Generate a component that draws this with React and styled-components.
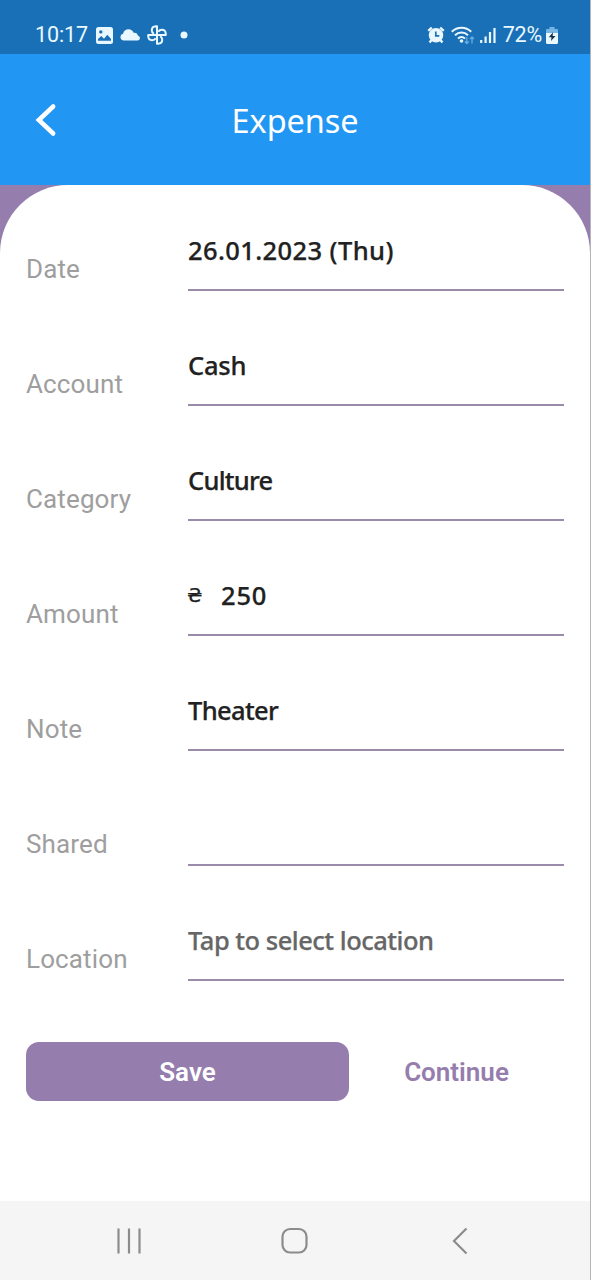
import React from "react";
import styled, { createGlobalStyle } from "styled-components";

const GlobalStyle = createGlobalStyle`
  * { box-sizing: border-box; }
  html, body { margin: 0; padding: 0; background: #fff; }
  button { border: 0; padding: 0; background: none; font: inherit; color: inherit; }
`;

const Screen = styled.div`
  width: 100%;
  height: 1280px;
  display: flex;
  flex-direction: column;
  overflow: hidden;
  background: #fff;
  border-right: 1px solid rgba(90, 90, 100, 0.45);
  font-family: Roboto, "Noto Sans", sans-serif;
`;

const StatusBar = styled.header`
  height: 54px;
  flex: none;
  display: flex;
  align-items: center;
  justify-content: space-between;
  padding: 16px 32px 0 35px;
  background: #1a70b7;
  color: #e9f8ff;
`;

const StatusGroup = styled.div`
  display: flex;
  align-items: center;
  gap: ${(p) => p.$gap}px;
`;

const StatusText = styled.span`
  font-size: 21.5px;
  line-height: 24px;
  letter-spacing: ${(p) => p.$tracking || 0}px;
`;

const Glyph = styled.svg`
  display: block;
  flex: none;
`;

const TitleBar = styled.div`
  height: 131px;
  flex: none;
  display: grid;
  grid-template-columns: 90px 1fr 90px;
  align-items: center;
  background: #2196f3;
  color: #fff;
`;

const BackButton = styled.button`
  display: flex;
  padding-left: 35px;
`;

const Title = styled.h1`
  margin: 0;
  padding-top: 3px;
  text-align: center;
  font: 400 32.5px/44px "Noto Sans", sans-serif;
  letter-spacing: -0.1px;
`;

const Backdrop = styled.main`
  flex: 1;
  display: flex;
  background: linear-gradient(#957dad 0 80px, #fff 80px);
`;

const Sheet = styled.section`
  flex: 1;
  padding: 46.4px 26px 0;
  background: #fff;
  border-radius: 68px 68px 0 0;
`;

const Fields = styled.div`
  display: flex;
  flex-direction: column;
  gap: 54.9px;
`;

const Field = styled.div`
  height: 60px;
  display: flex;
`;

const Label = styled.span`
  width: 162px;
  flex: none;
  padding-top: 23px;
  font-size: 26px;
  line-height: 30px;
  letter-spacing: 0.13px;
  color: #9e9e9e;
`;

const Value = styled.div`
  flex: 1;
  display: flex;
  align-items: flex-start;
  gap: 19px;
  border-bottom: 2px solid #998ba9;
  font: 500 25.5px/38px "Noto Sans", sans-serif;
  -webkit-text-stroke: 0.25px currentColor;
  white-space: nowrap;
  letter-spacing: ${(p) => p.$tracking || 0}px;
  color: ${(p) => (p.$muted ? "#666" : "#212121")};
`;

const Currency = styled.span`
  width: 14px;
  font: 400 20px/39px "DejaVu Sans", sans-serif;
  margin-left: -1px;
  margin-right: 1px;
`;

const Actions = styled.div`
  display: flex;
  margin-top: 61px;
`;

const ActionButton = styled.button`
  width: ${(p) => (p.$primary ? 323 : 215)}px;
  height: 59px;
  padding-top: 1px;
  border-radius: 13px;
  font-size: 26px;
  font-weight: 600;
  background: ${(p) => (p.$primary ? "#957dad" : "transparent")};
  color: ${(p) => (p.$primary ? "#fff" : "#957dad")};
`;

const NavBar = styled.nav`
  height: 79px;
  flex: none;
  display: grid;
  grid-template-columns: 165px 165px 168px;
  justify-content: start;
  justify-items: center;
  align-items: center;
  padding-left: 46px;
  background: #f5f5f5;
  color: #8c8c8c;
`;

const fields = [
  { label: "Date", value: "26.01.2023 (Thu)", tracking: 0.4 },
  { label: "Account", value: "Cash", tracking: -0.25 },
  { label: "Category", value: "Culture", tracking: -0.75 },
  { label: "Amount", value: "250", tracking: 0.8, currency: "₴" },
  { label: "Note", value: "Theater", tracking: -0.65 },
  { label: "Shared", value: "" },
  { label: "Location", value: "Tap to select location", tracking: -0.5, muted: true },
];

const ImageIcon = () => (
  <Glyph width="17" height="17" viewBox="0 0 17 17">
    <path fill="currentColor" fillRule="evenodd" d="M2.500 0h12A2.500 2.500 0 0 1 17 2.500v12a2.500 2.500 0 0 1-2.500 2.500h-12A2.500 2.500 0 0 1 0 14.500v-12A2.500 2.500 0 0 1 2.500 0ZM2 13.800h13V12l-3.700-4.200L8 11.700 5.300 9 2 12ZM4.800 3.200a1.700 1.700 0 1 0 0 3.400 1.700 1.700 0 0 0 0-3.400Z" />
  </Glyph>
);

const CloudIcon = () => (
  <Glyph width="20" height="12" viewBox="0 0 20 12">
    <path fill="currentColor" d="M3.500 11.500a3.400 3.400 0 0 1-.4-6.700C3.600 1.800 5.800.2 8.500.2c2.500 0 4.300 1.300 5.100 3.500 2.700-.3 4 1 4.200 2.700 3 .9 2.700 5.100-.3 5.100Z" />
  </Glyph>
);

const PinwheelIcon = () => (
  <Glyph width="20" height="20" viewBox="0 0 20 20" fill="none" stroke="currentColor" strokeWidth="2" strokeLinejoin="round">
    {[0, 90, 180, 270].map((a) => (
      <path key={a} transform={`rotate(${a} 10 10)`} d="M10 10V1.200H9C6 1.300 4.800 3.300 4.800 5.200 4.800 6.800 5.600 8 6.800 8.800" />
    ))}
  </Glyph>
);

const DotIcon = () => (
  <Glyph width="20" height="8" viewBox="0 0 20 8"><circle cx="10" cy="4" r="3.500" fill="currentColor" /></Glyph>
);

const AlarmIcon = () => (
  <Glyph width="18" height="18" viewBox="0 0 18 18" fill="none">
    <path d="M1.300 4.800 4.800 1.600M16.700 4.800l-3.500-3.200M4.300 14.300 2.600 16.500M13.700 14.300l1.700 2.200" stroke="currentColor" strokeWidth="2.400" />
    <circle cx="9" cy="9.300" r="7.200" fill="currentColor" />
    <path d="M8.800 5.500v4.300h3.500" stroke="#1a70b7" strokeWidth="1.700" />
  </Glyph>
);

const WifiIcon = () => (
  <Glyph width="24" height="19" viewBox="0 0 24 19" fill="none" strokeWidth="2">
    <path stroke="currentColor" d="M.8 5.800C6.200.4 14.800.4 20.200 5.800M4 9.300c3.700-3.600 9.300-3.600 13 0M7 12.600c2-2 5-2 7 0" />
    <circle cx="10.500" cy="15" r="1.800" fill="currentColor" />
    <path stroke="#65aee4" strokeWidth="1.300" d="M15.800 11v6.500M13.800 15.500l2 2 2-2M21 17.500V11M19 13l2-2 2 2" />
  </Glyph>
);

const SignalIcon = () => (
  <Glyph width="16" height="17" viewBox="0 0 16 17" fill="none" stroke="currentColor" strokeWidth="2.200">
    <path d="M1.200 16v-3M5.600 16V9.500M10 16V5M14.500 16V1" />
  </Glyph>
);

const BatteryIcon = () => (
  <Glyph width="12" height="17" viewBox="0 0 12 17">
    <path fill="#75b5e4" d="M3.500 0h5v2H11a1 1 0 0 1 1 1v4H0V3a1 1 0 0 1 1-1h2.500Z" />
    <path fill="currentColor" d="M0 6h12v9.500a1.500 1.500 0 0 1-1.500 1.500h-9A1.500 1.500 0 0 1 0 15.500Z" />
    <path fill="#162d42" d="M7 5.200 2.800 10.200h2.700L5 14l4.500-5H6.600Z" />
  </Glyph>
);

export default function App() {
  return (
    <>
      <GlobalStyle />
      <Screen>
        <StatusBar>
          <StatusGroup $gap={8}>
            <StatusText $tracking={-0.1}>10:17</StatusText>
            <StatusGroup $gap={7}>
              <ImageIcon />
              <CloudIcon />
              <PinwheelIcon />
              <DotIcon />
            </StatusGroup>
          </StatusGroup>
          <StatusGroup $gap={6.5}>
            <StatusGroup $gap={5.500}>
              <AlarmIcon />
              <WifiIcon />
              <SignalIcon />
            </StatusGroup>
            <StatusGroup $gap={4}>
              <StatusText $tracking={-0.2}>72%</StatusText>
              <BatteryIcon />
            </StatusGroup>
          </StatusGroup>
        </StatusBar>
        <TitleBar>
          <BackButton aria-label="Back">
            <Glyph width="22" height="34" viewBox="0 0 22 34" fill="none" stroke="currentColor" strokeWidth="4.500" strokeLinecap="round">
              <path d="M18.200 3.500 3.800 17l14.400 13.500" />
            </Glyph>
          </BackButton>
          <Title>Expense</Title>
        </TitleBar>
        <Backdrop>
          <Sheet>
            <Fields>
              {fields.map((f) => (
                <Field key={f.label}>
                  <Label>{f.label}</Label>
                  <Value $tracking={f.tracking} $muted={f.muted}>
                    {f.currency && <Currency>{f.currency}</Currency>}
                    <span>{f.value}</span>
                  </Value>
                </Field>
              ))}
            </Fields>
            <Actions>
              <ActionButton $primary>Save</ActionButton>
              <ActionButton>Continue</ActionButton>
            </Actions>
          </Sheet>
        </Backdrop>
        <NavBar>
          <Glyph width="28" height="28" viewBox="0 0 28 28" fill="none" stroke="currentColor" strokeWidth="2.200">
            <path d="M3.500 1.500v25M14 1.500v25M24.500 1.500v25" />
          </Glyph>
          <Glyph width="28" height="28" viewBox="0 0 28 28" fill="none" stroke="currentColor" strokeWidth="2.200">
            <rect x="2.500" y="2" width="24" height="23.500" rx="7.500" />
          </Glyph>
          <Glyph width="16" height="28" viewBox="0 0 16 28" fill="none" stroke="currentColor" strokeWidth="2.200">
            <path d="M14.500 1.500 2 14l12.500 12.500" />
          </Glyph>
        </NavBar>
      </Screen>
    </>
  );
}
